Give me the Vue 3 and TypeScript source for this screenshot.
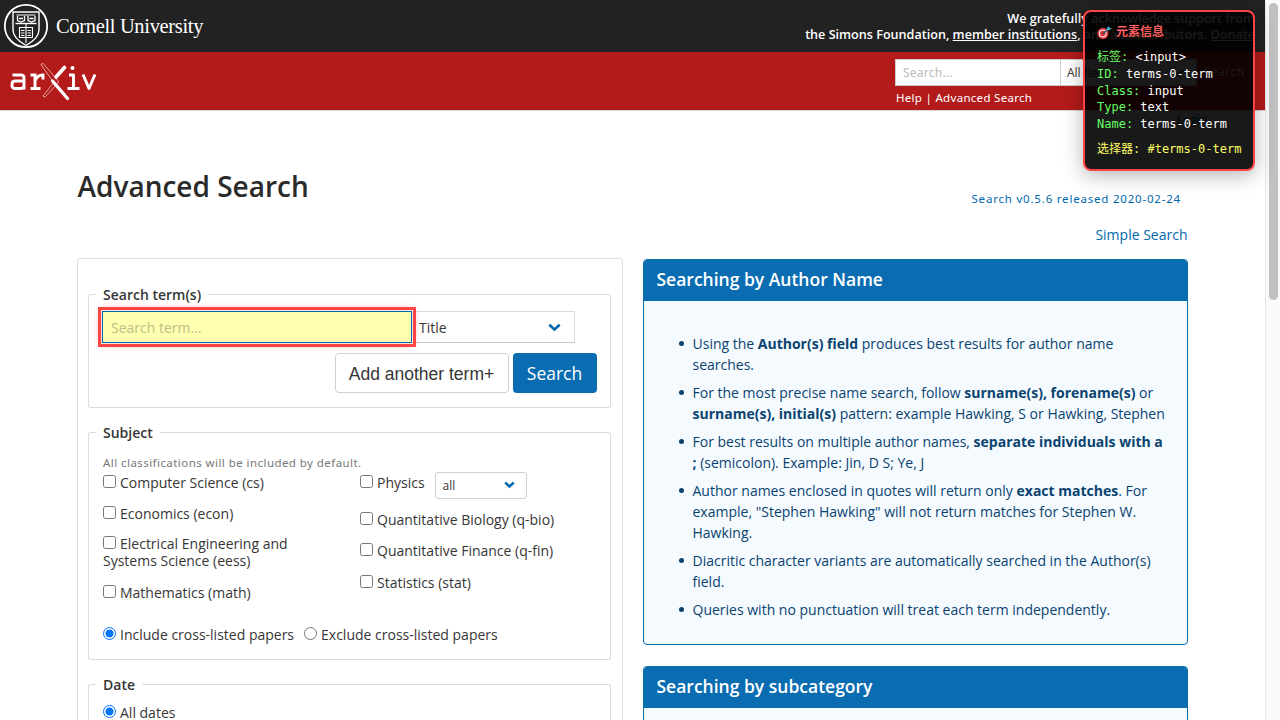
<script setup lang="ts">
interface Part { t: string; b?: boolean; br?: boolean }
const authorTips: Part[][] = [
  [{ t: 'Using the ' }, { t: 'Author(s) field', b: true }, { t: ' produces best results for author name' }, { t: 'searches.', br: true }],
  [{ t: 'For the most precise name search, follow ' }, { t: 'surname(s), forename(s)', b: true }, { t: ' or' }, { t: 'surname(s), initial(s)', b: true, br: true }, { t: ' pattern: example Hawking, S or Hawking, Stephen' }],
  [{ t: 'For best results on multiple author names, ' }, { t: 'separate individuals with a', b: true }, { t: ';', b: true, br: true }, { t: ' (semicolon). Example: Jin, D S; Ye, J' }],
  [{ t: 'Author names enclosed in quotes will return only ' }, { t: 'exact matches', b: true }, { t: '. For' }, { t: 'example, "Stephen Hawking" will not return matches for Stephen W.', br: true }, { t: 'Hawking.', br: true }],
  [{ t: 'Diacritic character variants are automatically searched in the Author(s)' }, { t: 'field.', br: true }],
  [{ t: 'Queries with no punctuation will treat each term independently.' }],
]
const info = [
  ['标签:', '<input>'],
  ['ID:', 'terms-0-term'],
  ['Class:', 'input'],
  ['Type:', 'text'],
  ['Name:', 'terms-0-term'],
]
</script>

<template>
  <div class="page">
    <div class="content">
      <header class="cornell">
        <svg class="seal" width="46" height="46" viewBox="0 0 46 46" fill="none" stroke="#fff">
          <circle cx="23" cy="23" r="21.2" stroke-width="1.8" />
          <path d="M10 9h26v18c0 7-6 11.500-13 15.500c-7-4-13-8.500-13-15.500z" stroke-width="1.400" />
          <path d="M12.500 20.500h21" stroke-width="1.400" />
          <path d="M13.500 12h19" stroke-width="1" />
          <path d="M14.500 13v4.500l3.500 1.500l3.500-1.500v-4.500M25 13v4.500l3.500 1.500l3.500-1.500v-4.500M16 15.500h4M26.500 15.500h4" stroke-width="1.300" />
          <path d="M16.500 24.500h13v10h-13zM23 21v19M18 27.500h3.500M24.500 27.500h3.500M18 30h3.500M24.500 30h3.500M18 32.500h3.500M24.500 32.500h3.500" stroke-width="1.100" />
        </svg>
        <span class="cu">Cornell University</span>
        <p class="support">We gratefully acknowledge support from<br>the Simons Foundation, <u>member institutions</u>, and all contributors. <u>Donate</u></p>
      </header>
      <div class="redbar">
        <svg class="arxiv" width="88" height="40" viewBox="0 0 88 40" fill="none" stroke="#fff">
          <path d="M2.500 12h8.500q3 0 3 3v11.500M14 18h-8.500q-3.500 0-3.500 3v1.500q0 3 3.500 3h5q3.500 0 3.500-3" stroke-width="2.900" />
          <path d="M20.500 12h4.500v13.500M20.500 25.500h10M25 18q2-6 8-6v4.500" stroke-width="2.900" />
          <path d="M31 1.500l2-1.200l15 17.500q1 1.500-.5 3l-2 1.500zM47 21l-11.500 12.500q-1.500 1.300-2.500-.5l11-14" stroke-width=".8" stroke-opacity=".75" />
          <path d="M54.500 4.500l-8.500 9.500" stroke-width="3.600" stroke-linecap="round" />
          <path d="M42.500 18l15 17.500" stroke-width="3.300" stroke-linecap="round" />
          <path d="M59 12h4.500v13.500M57.500 25.500h12M73 11.500l6 14l6-14" stroke-width="2.900" stroke-linejoin="round" />
          <circle cx="62.500" cy="5" r="2" fill="#fff" stroke="none" />
        </svg>
        <div class="quick">
          <div class="quick-row">
            <div class="qinput">Search...</div>
            <div class="qselect">All fields
              <svg width="12" height="8" viewBox="0 0 12 8"><path d="M1.500 1.500L6 6l4.500-4.500" fill="none" stroke="#0068ac" stroke-width="2.400" /></svg>
            </div>
            <span class="qbtn">Search</span>
          </div>
          <div class="qlinks">Help | Advanced Search</div>
        </div>
      </div>
      <div class="login">Login</div>

      <main>
        <div class="title-row">
          <h1>Advanced Search</h1>
          <span class="version">Search v0.5.6 released 2020-02-24</span>
        </div>
        <div class="simple">Simple Search</div>
        <div class="columns">
          <section class="box">
            <div class="field terms">
              <div class="legend">Search term(s)</div>
              <div class="term-row">
                <div class="term">Search term...</div>
                <div class="select">Title
                  <svg width="13" height="9" viewBox="0 0 13 9"><path d="M1.300 1.700L6.500 6.500l5.200-4.800" fill="none" stroke="#0068ac" stroke-width="2.600" /></svg>
                </div>
              </div>
              <div class="buttons">
                <div class="btn add">Add another term+</div>
                <div class="btn go">Search</div>
              </div>
            </div>
            <div class="field subject">
              <div class="legend">Subject</div>
              <div class="help">All classifications will be included by default.</div>
              <div class="subjects">
                <div class="left">
                  <label><i class="check"></i>Computer Science (cs)</label>
                  <label><i class="check"></i>Economics (econ)</label>
                  <label><i class="check"></i>Electrical Engineering and<br>Systems Science (eess)</label>
                  <label><i class="check"></i>Mathematics (math)</label>
                </div>
                <div class="right">
                  <div class="physics">
                    <label><i class="check"></i>Physics</label>
                    <div class="small-select">all
                      <svg width="11" height="8" viewBox="0 0 11 8"><path d="M1.200 1.500L5.500 5.500l4.300-4" fill="none" stroke="#0068ac" stroke-width="2.400" /></svg>
                    </div>
                  </div>
                  <label><i class="check"></i>Quantitative Biology (q-bio)</label>
                  <label class="qfin"><i class="check"></i>Quantitative Finance (q-fin)</label>
                  <label><i class="check"></i>Statistics (stat)</label>
                </div>
              </div>
              <div class="radios">
                <label><i class="radio on"></i>Include cross-listed papers</label>
                <label><i class="radio"></i>Exclude cross-listed papers</label>
              </div>
            </div>
            <div class="field date">
              <div class="legend">Date</div>
              <label><i class="radio on"></i>All dates</label>
            </div>
          </section>
          <aside>
            <article class="message first">
              <h2>Searching by Author Name</h2>
              <ul>
                <li v-for="(tip, i) in authorTips" :key="i">
                  <template v-for="(p, j) in tip" :key="j"><br v-if="p.br"><b v-if="p.b">{{ p.t }}</b><span v-else>{{ p.t }}</span></template>
                </li>
              </ul>
            </article>
            <article class="message">
              <h2>Searching by subcategory</h2>
              <div class="rest"></div>
            </article>
          </aside>
        </div>
      </main>
    </div>
    <div class="scrollbar"><div class="thumb"></div></div>

    <div class="tooltip">
      <div class="tip-title">
        <svg width="15" height="14" viewBox="0 0 15 14">
          <ellipse cx="6" cy="7.500" rx="5.600" ry="5.800" fill="#d92f38" />
          <circle cx="5.800" cy="7.500" r="4" fill="#f3dede" />
          <circle cx="5.800" cy="7.500" r="2.700" fill="#d92f38" />
          <path d="M6 7.500l5-4" stroke="#234b58" stroke-width="1.200" />
          <path d="M9.300 4.500l.5-2.500l2-2l.5 1.800l2.700.5l-2.700 2z" fill="#43abc4" />
        </svg>
        <span>元素信息</span>
      </div>
      <div v-for="row in info" :key="row[0]" class="tip-row"><span class="key">{{ row[0] }}</span> {{ row[1] }}</div>
      <div class="tip-sel">选择器: #terms-0-term</div>
    </div>
  </div>
</template>

<style>
body { margin: 0; overflow: hidden; }
</style>

<style scoped>
* { box-sizing: border-box; }
.page { position: relative; display: flex; width: 1280px; height: 720px; overflow: hidden; background: #fff; color: #363636; font: 14px/21px "Open Sans", sans-serif; }
.content { width: 1265px; height: 720px; overflow: hidden; }
.scrollbar { width: 15px; background: #fafafa; border-left: 1px solid #e7e7e7; padding: 3px 0 0 3px; }
.thumb { width: 9px; height: 297px; border-radius: 5px; background: #c1c1c1; }
.cornell { height: 52px; background: #222; display: flex; color: #fff; padding: 3px 10px 0 3px; }
.seal { flex: none; }
.cu { margin: 9px 0 0 7px; font: 20.500px/28px "Liberation Serif", serif; letter-spacing: -.34px; white-space: nowrap; }
.support { margin: 8px 0 0 auto; text-align: right; font-size: 12.600px; line-height: 16px; font-weight: 600; white-space: nowrap; }
.redbar { height: 59px; background: #b31b1b; border-bottom: 1px solid #d5d5d5; display: flex; justify-content: space-between; color: #fff; }
.arxiv { margin: 11px 0 0 10px; }
.quick { width: 370px; padding-top: 7px; }
.quick-row { display: flex; height: 27px; font-size: 12px; line-height: 26px; }
.qinput { width: 166px; border: 1px solid #ccc; background: #fff; color: #bbb; padding-left: 7px; font-family: "Noto Sans", sans-serif; letter-spacing: .25px; }
.qselect { width: 136px; background: #fff; color: #363636; border: 1px solid #ccc; border-left: 0; padding: 0 12px 0 6px; display: flex; align-items: center; justify-content: space-between; }
.qbtn { margin-left: 7px; letter-spacing: .4px; }
.qlinks { margin-top: 4px; padding-left: 1px; font: 11.500px/16px "Noto Sans", sans-serif; letter-spacing: .3px; }
.login { height: 21px; text-align: right; padding-right: 57px; font-size: 12px; line-height: 17px; font-weight: 600; color: #0068ac; }
main { padding: 36px 77px 0; }
.title-row { display: flex; justify-content: space-between; height: 56px; }
h1 { margin: 0 0 0 .5px; font-size: 28px; line-height: 36px; font-weight: 600; color: #2a2a2a; }
.version { margin: 23px 8px 0 0; font: 11.500px/16px "Noto Sans", sans-serif; letter-spacing: .8px; margin-right: 7px; color: #0068ac; white-space: nowrap; }
.simple { text-align: right; line-height: 22px; color: #0068ac; padding-right: .5px; }
.columns { display: flex; gap: 20px; margin-top: 12px; }
.box { width: 546px; height: 600px; border: 1px solid #dedede; border-radius: 3px; padding: 35px 11px 0 10px; }
.field { border: 1px solid #dbdbdb; border-radius: 2px; padding: 0 14px; }
.legend { display: table; font-weight: 600; line-height: 20px; margin: -10px 0 0 -7px; padding: 0 7px; background: #fff; }
label { display: block; white-space: nowrap; line-height: 17px; }
.terms { height: 114px; }
.term-row { display: flex; margin: 6px 0 0 -1px; height: 32px; }
.term { width: 310px; background: #ffffb0; border: 1px solid #0068ac; outline: 3px solid #f44; outline-offset: 1px; box-shadow: 0 0 0 1px #ffe5e0, 0 0 10px rgba(255,0,0,.5); color: #bdbd86; line-height: 31px; padding-left: 8px; z-index: 1; }
.select { width: 163px; border: 1px solid #dbdbdb; border-bottom-color: #c6c6c6; display: flex; justify-content: space-between; align-items: center; padding: 0 13px 0 6px; }
.buttons { display: flex; justify-content: flex-end; gap: 4px; margin-top: 10px; margin-right: -.5px; }
.btn { height: 40px; border-radius: 4px; font-size: 17.500px; line-height: 38px; text-align: center; white-space: nowrap; }
.add { width: 174px; border: 1px solid #d0d0d0; font-family: "Liberation Sans", sans-serif; line-height: 40px; }
.go { width: 84px; background: #0a6db1; color: #fff; line-height: 40px; }
.subject { height: 228px; margin-top: 24px; }
.help { font: 11.500px/16px "Noto Sans", sans-serif; letter-spacing: .44px; color: #777; margin-top: 12px; }
.subjects { display: flex; }
.left { width: 257px; padding-top: 3px; height: 149px; }
.left label { margin-bottom: 14px; }
.left label:nth-child(2) { margin-bottom: 13px; }
.left label:nth-child(3) { margin-bottom: 15px; }
.right label { margin-bottom: 14px; }
.right label.qfin { margin-bottom: 15px; }
.physics { display: flex; height: 40px; }
.physics label { padding-top: 3px; }
.small-select { width: 92px; height: 27px; margin-left: 10px; margin-top: .5px; border: 1px solid #d0d0d0; border-radius: 3px; font-size: 12px; padding: 0 11px 0 7px; display: flex; align-items: center; justify-content: space-between; }
.check { display: inline-block; width: 13px; height: 13px; border: 1px solid #777; border-radius: 2.500px; margin-right: 4px; vertical-align: .5px; }
.radio { display: inline-block; width: 13px; height: 13px; border: 1px solid #777; border-radius: 50%; margin-right: 4px; vertical-align: .5px; }
.radio.on { border-color: #0075ff; background: radial-gradient(circle, #0075ff 0 3.700px, #fff 4.300px); }
.radios { display: flex; gap: 10px; margin-top: 6px; }
.date { height: 120px; margin-top: 24px; }
.date label { margin-top: 9px; }
aside { width: 545px; margin-left: -.5px; padding-top: 1px; }
.message { border: 1px solid #0a6db1; border-radius: 4px; background: #f5faff; margin-bottom: 21px; height: 200px; overflow: hidden; }
.message.first { height: 386px; }
h2 { margin: 0; height: 41px; background: #0a6db1; color: #fff; font-size: 17.500px; line-height: 39px; font-weight: 600; padding-left: 13px; }
ul { margin: 32px 0 0; padding: 0 0 0 49px; list-style: none; color: #0a436f; }
li { margin-bottom: 7px; white-space: nowrap; line-height: 21px; }
li::before { content: ""; display: inline-block; width: 5px; height: 5px; border-radius: 50%; background: #0a436f; margin: 0 9px 0 -14px; vertical-align: 3px; }
.tooltip { position: absolute; left: 1083px; top: 10px; width: 172px; height: 161px; border: 2px solid #f44; border-radius: 8px; background: rgba(0,0,0,.9); padding: 12px; color: #fff; font: 12px/16.800px "DejaVu Sans Mono", "Noto Sans CJK SC", monospace; box-shadow: 0 4px 20px rgba(0,0,0,.3); white-space: nowrap; }
.tip-title { display: flex; align-items: center; gap: 4px; height: 17px; margin-bottom: 8px; color: #ff5f5f; font-weight: 700; }
.tip-row { height: 16.800px; }
.key { color: #6f6; }
.tip-sel { margin-top: 8px; color: #ff6; }
</style>
